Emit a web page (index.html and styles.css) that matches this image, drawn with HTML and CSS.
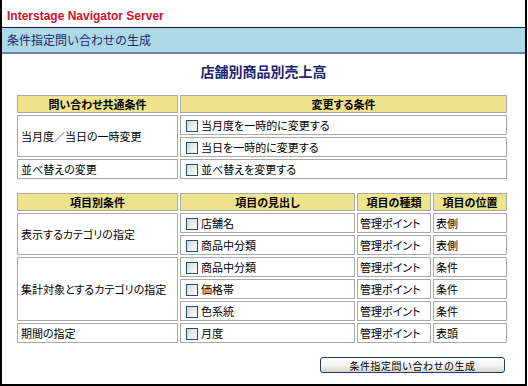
FILE: index.html
```html
<!DOCTYPE html>
<html>
<head>
  <meta charset="UTF-8">
  <title>Interstage Navigator Server</title>
  <link rel="stylesheet" href="styles.css">
</head>
<body>
  <div class="frame">
    <div class="title">Interstage Navigator Server</div>
    <div class="bar">条件指定問い合わせの生成</div>

    <h1 class="heading">店舗別商品別売上高</h1>

    <table class="cond">
      <tr>
        <th class="c-name">問い合わせ共通条件</th>
        <th>変更する条件</th>
      </tr>
      <tr>
        <td rowspan="2">当月度／当日の一時変更</td>
        <td><span class="chk"></span>当月度を一時的に変更する</td>
      </tr>
      <tr>
        <td><span class="chk"></span>当日を一時的に変更する</td>
      </tr>
      <tr>
        <td>並べ替えの変更</td>
        <td><span class="chk"></span>並べ替えを変更する</td>
      </tr>
    </table>

    <table class="cond items">
      <tr>
        <th class="c-name">項目別条件</th>
        <th class="c-head">項目の見出し</th>
        <th class="c-kind">項目の種類</th>
        <th class="c-pos">項目の位置</th>
      </tr>
      <tr>
        <td rowspan="2">表示するカテゴリの指定</td>
        <td><span class="chk"></span>店舗名</td>
        <td class="small">管理ポイント</td>
        <td class="small">表側</td>
      </tr>
      <tr>
        <td><span class="chk"></span>商品中分類</td>
        <td class="small">管理ポイント</td>
        <td class="small">表側</td>
      </tr>
      <tr>
        <td rowspan="3">集計対象とするカテゴリの指定</td>
        <td><span class="chk"></span>商品中分類</td>
        <td class="small">管理ポイント</td>
        <td class="small">条件</td>
      </tr>
      <tr>
        <td><span class="chk"></span>価格帯</td>
        <td class="small">管理ポイント</td>
        <td class="small">条件</td>
      </tr>
      <tr>
        <td><span class="chk"></span>色系統</td>
        <td class="small">管理ポイント</td>
        <td class="small">条件</td>
      </tr>
      <tr>
        <td>期間の指定</td>
        <td><span class="chk"></span>月度</td>
        <td class="small">管理ポイント</td>
        <td class="small">表頭</td>
      </tr>
    </table>

    <div class="actions">
      <button class="submit">条件指定問い合わせの生成</button>
    </div>
  </div>
</body>
</html>
```

FILE: styles.css
```css
* {
  box-sizing: border-box;
}
body {
  margin: 0;
  font-family: "Noto Sans CJK JP", "Liberation Sans", sans-serif;
  font-size: 11px;
  color: #000;
  background: #fff;
}
.frame {
  width: 527px;
  height: 386px;
  border-left: 2px solid #000;
  border-right: 2px solid #000;
  border-bottom: 2px solid #000;
}
.title {
  height: 28px;
  padding: 9px 0 0 5px;
  line-height: 14px;
  font-family: "Liberation Sans", Arial, sans-serif;
  font-size: 12px;
  font-weight: bold;
  color: #d0102c;
  border-bottom: 1px solid #16165c;
}
.bar {
  height: 26px;
  padding-left: 5px;
  line-height: 24px;
  font-size: 12px;
  color: #1c2a6a;
  background-color: #add8e6;
  border-bottom: 2px solid #6f80b8;
}
.heading {
  margin: 0;
  padding-top: 7px;
  height: 39px;
  line-height: 20px;
  font-size: 14px;
  font-weight: bold;
  text-align: center;
  color: #1a2470;
}
.cond {
  width: 494px;
  margin-left: 13px;
  border-collapse: separate;
  border-spacing: 2px;
  table-layout: fixed;
  font-feature-settings: "palt";
}
.items {
  margin-top: 10px;
}
.cond th,
.cond td {
  border: 1px solid #a9a9a9;
  padding: 0 3px;
  text-align: left;
  vertical-align: middle;
  white-space: nowrap;
}
.cond th {
  height: 18px;
  font-weight: bold;
  text-align: center;
  background-color: #efe48d;
}
.cond td {
  height: 20px;
}
.cond .c-name {
  width: 161px;
}
.cond .c-head {
  width: 175px;
}
.cond .c-kind,
.cond .c-pos {
  width: 74px;
}
.cond td.small {
  padding: 0 2px;
}
.chk {
  display: inline-block;
  width: 12px;
  height: 12px;
  margin: 0 3px 0 2px;
  vertical-align: -2px;
  border: 1px solid #1c5180;
  background: linear-gradient(135deg, #d4d4ce 0%, #f4f4f2 70%, #fff 100%);
}
.actions {
  display: flex;
  justify-content: flex-end;
  padding-right: 20px;
  margin-top: 12px;
}
.submit {
  width: 185px;
  height: 16px;
  padding: 0;
  font-family: "Noto Sans CJK JP", sans-serif;
  font-size: 10px;
  letter-spacing: 0.5px;
  line-height: 13px;
  color: #000;
  border: 1px solid #1e3f6e;
  border-radius: 3px;
  background: linear-gradient(#ffffff 0%, #f2f2ee 60%, #d6d4cc 100%);
}
```
